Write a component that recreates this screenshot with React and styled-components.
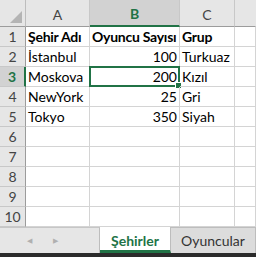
import React from "react";
import styled, { createGlobalStyle } from "styled-components";

const GlobalStyle = createGlobalStyle`
  html, body {
    margin: 0;
    padding: 0;
    background: #fff;
    overflow: hidden;
  }
  body {
    font-family: Lato, "Liberation Sans", sans-serif;
  }
`;

const GREEN = "#217346";

const columns = ["A", "B", "C", "D"];
const rows = [
  ["Şehir Adı", "Oyuncu Sayısı", "Grup"],
  ["İstanbul", "100", "Turkuaz"],
  ["Moskova", "200", "Kızıl"],
  ["NewYork", "25", "Gri"],
  ["Tokyo", "350", "Siyah"],
  ["", "", ""],
  ["", "", ""],
  ["", "", ""],
  ["", "", ""],
  ["", "", ""],
];

const Window = styled.div`
  width: 256px;
  height: 257px;
  display: flex;
  flex-direction: column;
  overflow: hidden;
`;

const Sheet = styled.div`
  display: grid;
  grid-template-columns: 26px 64px 90px 55px 1fr;
  grid-template-rows: 27px repeat(10, 20px);
`;

const Corner = styled.div`
  position: relative;
  background: #e6e6e6;
  border-right: 1px solid #bdbdbd;
  border-bottom: 1px solid #9c9c9c;
  &::after {
    content: "";
    position: absolute;
    right: 3px;
    bottom: 3px;
    width: 0;
    height: 0;
    border-left: 12px solid transparent;
    border-bottom: 12px solid #b4b4b4;
  }
`;

const ColHead = styled.div`
  background: ${(p) => (p.$active ? "#d2d2d2" : "#e6e6e6")};
  color: ${(p) => (p.$active ? GREEN : "#444")};
  font-weight: ${(p) => (p.$active ? 700 : 400)};
  font-size: 14px;
  display: flex;
  align-items: center;
  justify-content: center;
  padding-top: 2px;
  box-sizing: border-box;
  border-right: 1px solid ${(p) => (p.$last ? "transparent" : "#c8c8c8")};
  border-bottom: ${(p) => (p.$active ? `2px solid ${GREEN}` : "1px solid #9c9c9c")};
`;

const RowHead = styled.div`
  background: ${(p) => (p.$active ? "#d2d2d2" : "#e6e6e6")};
  color: ${(p) => (p.$active ? GREEN : "#444")};
  font-weight: ${(p) => (p.$active ? 700 : 400)};
  font-size: 14px;
  display: flex;
  align-items: flex-end;
  justify-content: center;
  padding-bottom: 1px;
  box-sizing: border-box;
  border-right: ${(p) => (p.$active ? `2px solid ${GREEN}` : "1px solid #9c9c9c")};
  border-bottom: 1px solid #c8c8c8;
`;

const Cell = styled.div`
  position: relative;
  font-size: 14px;
  font-weight: ${(p) => (p.$bold ? 700 : 400)};
  letter-spacing: ${(p) => (p.$bold ? "-0.25px" : "0")};
  color: #000;
  display: flex;
  align-items: flex-end;
  justify-content: ${(p) => (p.$num ? "flex-end" : "flex-start")};
  padding: 0 2px 1px 2px;
  box-sizing: border-box;
  white-space: nowrap;
  overflow: visible;
  border-right: 1px solid #d4d4d4;
  border-bottom: 1px solid #d4d4d4;
`;

const Selection = styled.div`
  position: absolute;
  left: -1px;
  top: -1px;
  right: -1px;
  bottom: -1px;
  border: 2px solid ${GREEN};
  pointer-events: none;
  &::after {
    content: "";
    position: absolute;
    right: -4px;
    bottom: -4px;
    width: 5px;
    height: 5px;
    background: ${GREEN};
    border: 1px solid #fff;
  }
`;

const TabBar = styled.div`
  height: 26px;
  display: flex;
  background: #dcdcdc;
`;

const Nav = styled.div`
  width: 100px;
  display: flex;
  align-items: center;
  justify-content: center;
  gap: 21px;
  padding-right: 14px;
  box-sizing: border-box;
  background: #e6e6e6;
  border-top: 1px solid #c6c6c6;
  border-right: 1px solid #bdbdbd;
  color: #b0b0b0;
  font-size: 7px;
`;

const Tab = styled.div`
  display: flex;
  align-items: center;
  justify-content: center;
  box-sizing: border-box;
  font-size: 14px;
  width: ${(p) => (p.$active ? "71px" : "85px")};
  background: ${(p) => (p.$active ? "#fff" : "#dcdcdc")};
  color: ${(p) => (p.$active ? GREEN : "#333")};
  font-weight: ${(p) => (p.$active ? 700 : 400)};
  border-top: ${(p) => (p.$active ? "none" : "1px solid #bdbdbd")};
  border-right: 1px solid #bdbdbd;
  border-bottom: ${(p) => (p.$active ? `3px solid ${GREEN}` : "none")};
  padding-top: ${(p) => (p.$active ? "3px" : "0")};
`;

const StatusBar = styled.div`
  height: 4px;
  background: #2b2b2b;
`;

export default function App() {
  return (
    <>
      <GlobalStyle />
      <Window>
        <Sheet>
          <Corner />
          {columns.map((c, i) => (
            <ColHead key={c} $active={c === "B"} $last={i === columns.length - 1}>
              {c === "D" ? "" : c}
            </ColHead>
          ))}
          {rows.map((r, ri) => (
            <React.Fragment key={ri}>
              <RowHead $active={ri === 2}>{ri + 1}</RowHead>
              {r.map((v, ci) => (
                <Cell key={ci} $bold={ri === 0} $num={ci === 1 && ri > 0}>
                  {v}
                  {ri === 2 && ci === 1 && <Selection />}
                </Cell>
              ))}
              <Cell />
            </React.Fragment>
          ))}
        </Sheet>
        <TabBar>
          <Nav>
            <span>◀</span>
            <span>▶</span>
          </Nav>
          <Tab $active>Şehirler</Tab>
          <Tab>Oyuncular</Tab>
        </TabBar>
        <StatusBar />
      </Window>
    </>
  );
}
